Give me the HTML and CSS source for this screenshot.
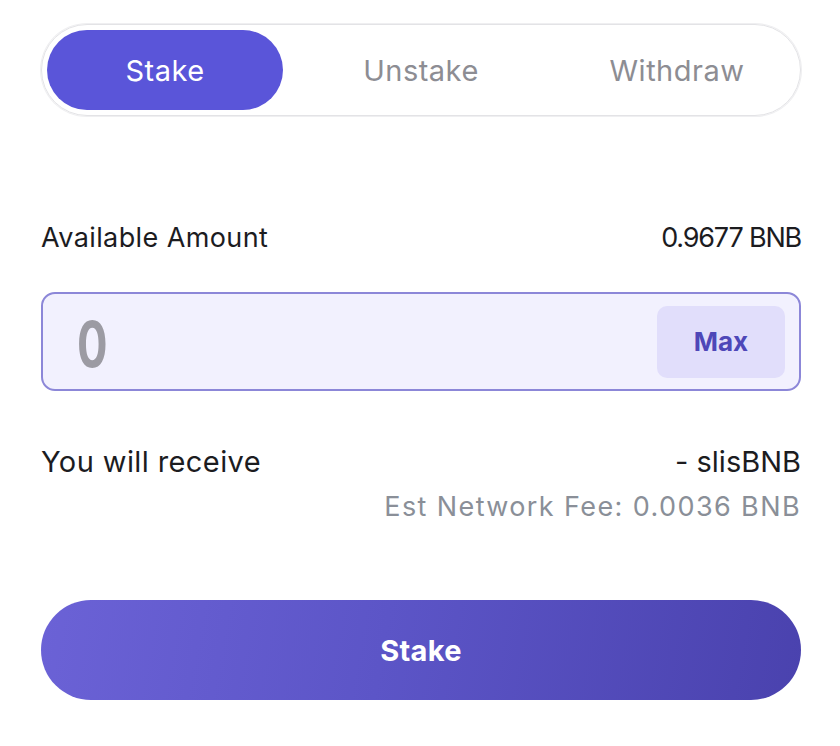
FILE: index.html
```html
<!DOCTYPE html>
<html>
<head>
<meta charset="utf-8">
<link rel="stylesheet" href="styles.css">
</head>
<body>
<div class="panel">
  <div class="tabs">
    <div class="tab active">Stake</div>
    <div class="tab">Unstake</div>
    <div class="tab">Withdraw</div>
  </div>
  <div class="row avail">
    <span class="label">Available Amount</span>
    <span class="value">0.9677 BNB</span>
  </div>
  <div class="input">
    <span class="amount">0</span>
    <button class="max">Max</button>
  </div>
  <div class="row receive">
    <span class="label">You will receive</span>
    <span>- slisBNB</span>
  </div>
  <div class="fee">Est Network Fee: 0.0036 BNB</div>
  <button class="submit">Stake</button>
</div>
</body>
</html>
```
FILE: styles.css
```css
html, body {
  margin: 0;
  padding: 0;
  background: #ffffff;
}
body {
  font-family: "Inter", "Lato", sans-serif;
  color: #1c1c1f;
}
.panel {
  width: 760px;
  margin-left: 41px;
  padding-top: 24px;
  display: flex;
  flex-direction: column;
}
.tabs {
  display: grid;
  grid-template-columns: repeat(3, 1fr);
  column-gap: 20px;
  padding: 5px 5px;
  border: 1px solid #e3e3e6;
  box-shadow: 0 0 0 1px #efeff1;
  border-radius: 46px;
  height: 80px;
}
.tab {
  display: flex;
  align-items: center;
  justify-content: center;
  font-size: 29px;
  color: #8d8d93;
  border-radius: 40px;
  letter-spacing: 0.5px;
}
.tab.active {
  background: #5a55d9;
  color: #ffffff;
}
.row {
  display: flex;
  justify-content: space-between;
  align-items: center;
  line-height: 1;
}
.avail {
  margin-top: 106px;
  font-size: 27px;
  height: 30px;
}
.avail .label {
  letter-spacing: 0.4px;
}
.avail .value {
  letter-spacing: -1.2px;
}
.input {
  margin-top: 40px;
  height: 99px;
  box-sizing: border-box;
  border: 2px solid #8c87d8;
  border-radius: 14px;
  background: #f2f1fe;
  display: flex;
  align-items: center;
  justify-content: space-between;
  padding: 0 14px 0 34px;
}
.amount {
  font-size: 63px;
  line-height: 1;
  font-weight: 700;
  color: #9c9ba3;
  transform: translateY(3px) scaleX(0.72);
  transform-origin: left center;
}
.max {
  width: 128px;
  height: 72px;
  border: none;
  border-radius: 10px;
  background: #e1defb;
  color: #4e47b8;
  font-family: inherit;
  font-size: 26px;
  font-weight: 700;
}
.receive {
  margin-top: 52px;
  font-size: 29px;
  height: 36px;
}
.receive .label {
  letter-spacing: 0.4px;
}
.fee {
  margin-top: 11px;
  line-height: 34px;
  text-align: right;
  font-size: 27px;
  color: #8a8f98;
  letter-spacing: 1.4px;
}
.submit {
  margin-top: 76px;
  height: 100px;
  border: none;
  border-radius: 50px;
  background: linear-gradient(100deg, #6b62d6 0%, #5c55c7 45%, #4a42ae 100%);
  color: #ffffff;
  font-family: inherit;
  font-size: 29px;
  font-weight: 700;
  letter-spacing: 0.3px;
}
```
